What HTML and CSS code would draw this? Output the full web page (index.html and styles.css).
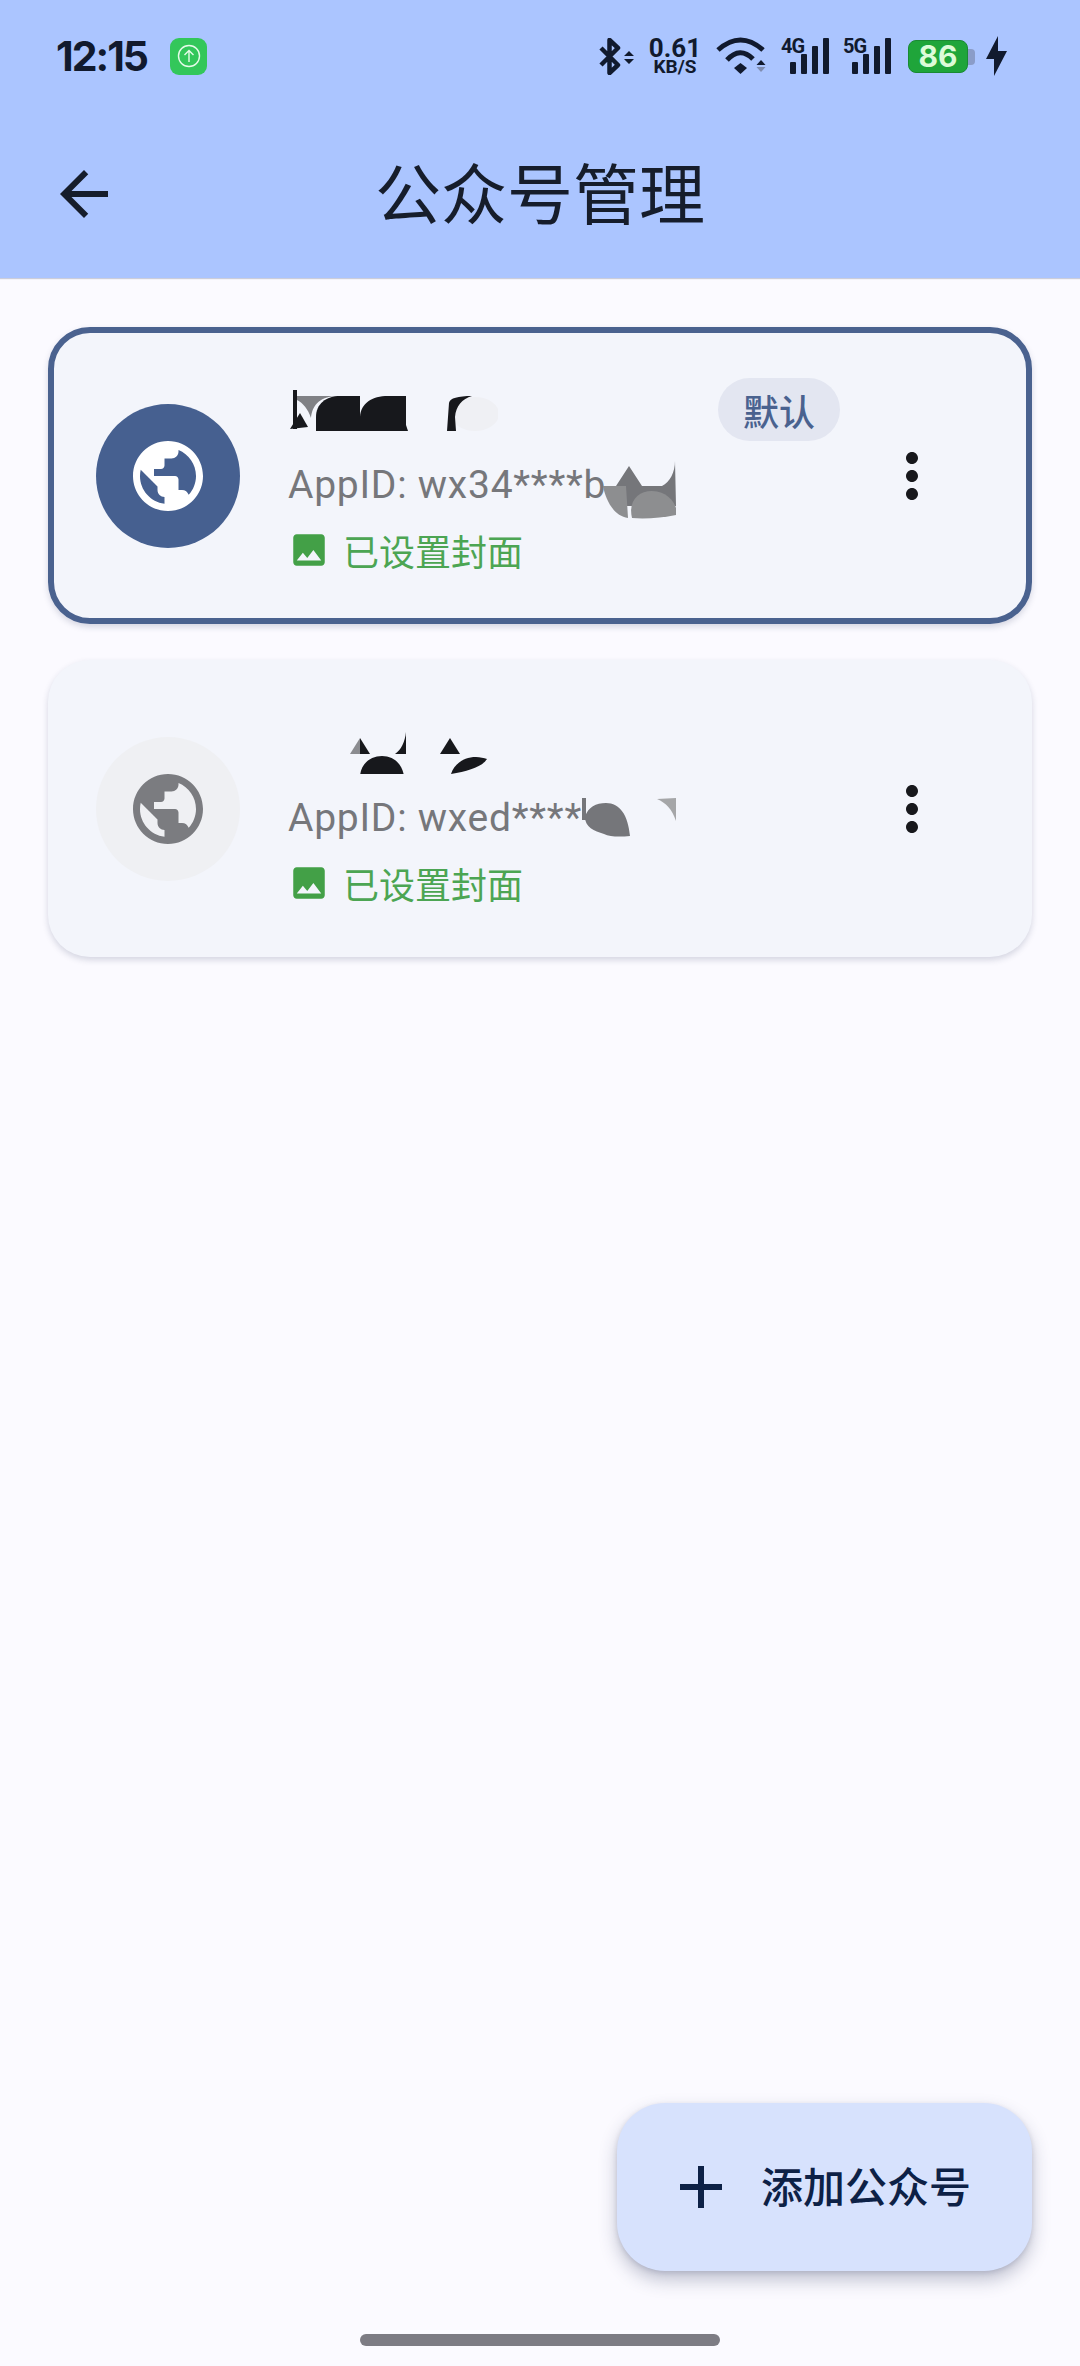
FILE: index.html
```html
<!DOCTYPE html>
<html>
<head>
  <title>公众号管理</title>
  <link rel="stylesheet" href="styles.css">
</head>
<body>
  <div class="header">
    <div class="status-bar">
      <span class="time">12:15</span>
      <span class="app-badge">
        <svg width="24" height="24" viewBox="0 0 24 24" fill="none" stroke="#e6fbe9" stroke-width="1.4"><circle cx="12" cy="12" r="10.5"/><path d="M12 18V6.5M7.5 11L12 6.5 16.5 11"/></svg>
      </span>
      <div class="status-icons">
        <svg width="36" height="37" viewBox="0 0 36 37"><path d="M2 10L19 27 10.500 35V2L19 10 2 27" fill="none" stroke="#111a2e" stroke-width="4.500" stroke-linejoin="round"/><path d="M30 13l5 5H25zM25 21h10l-5 5z" fill="#111a2e"/></svg>
        <div class="speed">
          <span class="speed-num">0.61</span>
          <span class="speed-unit">KB/S</span>
        </div>
        <svg width="52" height="38" viewBox="0 0 52 38" fill="none" stroke="#111a2e" stroke-width="5"><path d="M3 13Q25.500-7 48 13"/><path d="M12 23Q25 9 38 22"/><path d="M19 31l6.500-5 6.500 5-6.500 6z" fill="#111a2e" stroke="none"/><path d="M46 23l4.500 5h-9z" fill="#111a2e" stroke="none"/><path d="M41.500 30h9l-4.500 5z" fill="#7f8db0" stroke="none"/></svg>
        <svg class="net" width="48" height="38" viewBox="0 0 48 38"><text x="0" y="16">4G</text><rect x="9" y="25" width="6" height="12" rx="1"/><rect x="20" y="17" width="6" height="20" rx="1"/><rect x="31" y="9" width="6" height="28" rx="1"/><rect x="42" y="1" width="6" height="36" rx="1"/></svg>
        <svg class="net" width="48" height="38" viewBox="0 0 48 38"><text x="0" y="16">5G</text><rect x="9" y="25" width="6" height="12" rx="1"/><rect x="20" y="17" width="6" height="20" rx="1"/><rect x="31" y="9" width="6" height="28" rx="1"/><rect x="42" y="1" width="6" height="36" rx="1"/></svg>
        <div class="battery">
          <span class="battery-level">86</span>
          <span class="battery-cap"></span>
        </div>
        <svg class="bolt" width="21" height="40" viewBox="0 0 21 40"><path d="M12 0L0 23h8L8 40 21 15h-9z" fill="#111a2e"/></svg>
      </div>
    </div>
    <div class="toolbar">
      <svg class="back" width="72" height="72" viewBox="0 0 24 24"><path d="M20 11H7.830l5.590-5.590L12 4l-8 8 8 8 1.410-1.410L7.830 13H20v-2z" fill="#161d2b"/></svg>
      <h1 class="title">公众号管理</h1>
    </div>
  </div>

  <div class="list">
    <div class="card card-default">
      <div class="avatar avatar-on">
        <svg width="84" height="84" viewBox="0 0 24 24"><path d="M12 2C6.480 2 2 6.480 2 12s4.480 10 10 10 10-4.480 10-10S17.520 2 12 2zm-1 17.930c-3.950-.49-7-3.850-7-7.930 0-.62.08-1.210.21-1.790L9 15v1c0 1.100.9 2 2 2v1.930zm6.900-2.540c-.26-.81-1-1.390-1.900-1.390h-1v-3c0-.55-.45-1-1-1H8v-2h2c.55 0 1-.45 1-1V7h2c1.100 0 2-.9 2-2v-.41c2.930 1.190 5 4.060 5 7.410 0 2.080-.8 3.970-2.100 5.390z" fill="#fff"/></svg>
      </div>
      <div class="info">
        <div class="name-row">
          <!-- name is smudged out in the screenshot -->
          <svg class="smudge" width="210" height="63" viewBox="0 0 210 63">
            <rect x="5" y="12" width="4" height="39" fill="#17181c"/>
            <path d="M2 51l18-2-8-14z" fill="#17181c"/>
            <path d="M9 18H48C30 19 24 29 23 40 20 31 15 25 9 22z" fill="#808185"/>
            <path d="M28 53V39C28 26 38 18 52 18H72V53z" fill="#17181c"/>
            <path d="M72 53V39C73 25 84 18 100 18H118V47L120 53z" fill="#17181c"/>
            <ellipse cx="187" cy="36" rx="24" ry="17" fill="#eff0f4"/>
            <path d="M159 53L161 25C162 20 170 18 184 18 174 21 168 28 167 39L168 53z" fill="#17181c"/>
          </svg>
          <span class="tag">默认</span>
        </div>
        <div class="appid">
          AppID: wx34****b
          <svg class="smudge-id" width="80" height="66" viewBox="0 0 80 66">
            <path d="M3 30H16L29 10 42 30H62C70 26 75 16 75 5L76 50H12z" fill="#75767a"/>
            <path d="M3 30H26L28 62C14 60 6 45 3 30z" fill="#8d8e90"/>
            <path d="M32 62C28 45 38 35 52 35 66 35 74 45 76 52V59C62 62 45 63 32 62z" fill="#8d8e90"/>
          </svg>
        </div>
        <div class="cover">
          <svg width="42" height="42" viewBox="0 0 24 24"><path d="M21 19V5c0-1.100-.9-2-2-2H5c-1.100 0-2 .9-2 2v14c0 1.100.9 2 2 2h14c1.100 0 2-.9 2-2zM8.500 13.500l2.500 3.010L14.500 12l4.500 6H5l3.500-4.500z" fill="#43a047"/></svg>
          <span>已设置封面</span>
        </div>
      </div>
      <svg class="more" width="72" height="72" viewBox="0 0 24 24"><path d="M12 8c1.100 0 2-.9 2-2s-.9-2-2-2-2 .9-2 2 .9 2 2 2zm0 2c-1.100 0-2 .9-2 2s.9 2 2 2 2-.9 2-2-.9-2-2-2zm0 6c-1.100 0-2 .9-2 2s.9 2 2 2 2-.9 2-2-.9-2-2-2z" fill="#17181c"/></svg>
    </div>

    <div class="card">
      <div class="avatar avatar-off">
        <svg width="84" height="84" viewBox="0 0 24 24"><path d="M12 2C6.480 2 2 6.480 2 12s4.480 10 10 10 10-4.480 10-10S17.520 2 12 2zm-1 17.930c-3.950-.49-7-3.850-7-7.930 0-.62.08-1.210.21-1.790L9 15v1c0 1.100.9 2 2 2v1.930zm6.900-2.540c-.26-.81-1-1.390-1.900-1.390h-1v-3c0-.55-.45-1-1-1H8v-2h2c.55 0 1-.45 1-1V7h2c1.100 0 2-.9 2-2v-.41c2.930 1.190 5 4.060 5 7.410 0 2.080-.8 3.970-2.100 5.390z" fill="#7b7c80"/></svg>
      </div>
      <div class="info">
        <div class="name-row">
          <svg class="smudge" width="210" height="63" viewBox="0 0 210 63">
            <path d="M62 43L72 43 72 27z" fill="#8b8c90"/>
            <path d="M72 27L72 43H82z" fill="#17181c"/>
            <path d="M118 21V43H107C113 39 117 31 118 21z" fill="#17181c"/>
            <path d="M72 65C73 52 83 45 94 45 105 45 114 52 116 65z" fill="#17181c"/>
            <path d="M152 43L162 27 172 43z" fill="#17181c"/>
            <path d="M163 63C166 53 176 46 188 46 192 46 196 47 199 48 194 56 180 60 163 63z" fill="#17181c"/>
          </svg>
        </div>
        <div class="appid">
          AppID: wxed****
          <svg class="smudge-id smudge-id-2" width="100" height="46" viewBox="0 0 100 46">
            <rect x="2" y="5" width="4" height="22" fill="#75767a"/>
            <path d="M5 24C8 14 16 10 26 10 40 10 48 22 50 43 40 44 30 44 24 41 14 38 5 34 5 24z" fill="#75767a"/>
            <path d="M77 6L96 5V28C92 16 86 10 77 6z" fill="#a5a6a8"/>
          </svg>
        </div>
        <div class="cover">
          <svg width="42" height="42" viewBox="0 0 24 24"><path d="M21 19V5c0-1.100-.9-2-2-2H5c-1.100 0-2 .9-2 2v14c0 1.100.9 2 2 2h14c1.100 0 2-.9 2-2zM8.500 13.500l2.500 3.010L14.500 12l4.500 6H5l3.500-4.500z" fill="#43a047"/></svg>
          <span>已设置封面</span>
        </div>
      </div>
      <svg class="more" width="72" height="72" viewBox="0 0 24 24"><path d="M12 8c1.100 0 2-.9 2-2s-.9-2-2-2-2 .9-2 2 .9 2 2 2zm0 2c-1.100 0-2 .9-2 2s.9 2 2 2 2-.9 2-2-.9-2-2-2zm0 6c-1.100 0-2 .9-2 2s.9 2 2 2 2-.9 2-2-.9-2-2-2z" fill="#17181c"/></svg>
    </div>
  </div>

  <div class="fab">
    <svg width="72" height="72" viewBox="0 0 24 24"><path d="M19 13h-6v6h-2v-6H5v-2h6V5h2v6h6v2z" fill="#0d2146"/></svg>
    <span class="fab-label">添加公众号</span>
  </div>

  <div class="home-bar"></div>
</body>
</html>
```

FILE: styles.css
```css
* { box-sizing: border-box; }
body {
  margin: 0; height: 2366px; overflow: hidden; position: relative;
  display: flex; flex-direction: column;
  background: #fbfaff;
  font-family: Roboto, "Noto Sans CJK SC", sans-serif;
}

/* header */
.header { height: 278px; background: #abc5ff; box-shadow: 0 1px 1px rgba(60,70,110,0.25); flex: none; }
.status-bar { height: 110px; display: flex; align-items: center; padding: 2px 73px 0 56px; }
.time { font-family: Inter, sans-serif; font-weight: 700; font-size: 41px; letter-spacing: -2px; color: #111a2e; }
.app-badge {
  width: 37px; height: 37px; margin-left: 23px; border-radius: 9px; background: #33c75a;
  display: flex; align-items: center; justify-content: center;
}
.status-icons { margin-left: auto; display: flex; align-items: center; gap: 14px; }
.speed { width: 52px; display: flex; flex-direction: column; align-items: center; color: #111a2e; font-weight: 700; }
.speed-num { font-size: 26px; line-height: 21px; }
.speed-unit { font-size: 19px; line-height: 15px; }
.net { overflow: visible; }
.net rect { fill: #111a2e; }
.net text { font-family: Roboto, sans-serif; font-weight: 700; font-size: 20px; letter-spacing: -1px; fill: #111a2e; }
.battery {
  width: 60px; height: 33px; margin-left: 3px; margin-right: 7px; position: relative;
  background: #1fa53a; border-radius: 8px; border: 1px solid #1a8a33;
  display: flex; align-items: center; justify-content: center;
}
.battery-level { font-family: Inter, sans-serif; font-weight: 700; font-size: 30px; color: #dcfbd8; }
.battery-cap { position: absolute; right: -8px; top: 8px; width: 7px; height: 16px; background: #8a9cc8; border-radius: 0 4px 4px 0; }
.bolt { margin-left: -3px; }
.toolbar { height: 168px; padding-left: 48px; display: grid; grid-template-columns: 1fr auto 1fr; align-items: center; }
.title { margin: 0 0 8px -48px; font-size: 66px; font-weight: 400; color: #161d2b; line-height: 1; font-family: "Noto Sans CJK SC", sans-serif; }

/* account cards */
.list { padding: 49px 48px 0; display: flex; flex-direction: column; gap: 36px; }
.card {
  height: 297px; display: flex; align-items: center; padding: 0 78px 0 42px;
  background: #f3f5fb; border: 6px solid transparent; border-radius: 42px;
  box-shadow: 0 3px 6px rgba(40,50,90,0.18);
}
.card-default { border-color: #4a628f; }
.avatar { width: 144px; height: 144px; border-radius: 50%; display: flex; align-items: center; justify-content: center; flex: none; }
.avatar-on { background: #466090; }
.avatar-off { background: #eff0f3; }
.info { flex: 1; margin-left: 48px; min-width: 0; }
.name-row { height: 63px; display: flex; align-items: flex-start; }
.tag {
  margin-left: auto; width: 122px; height: 63px; border-radius: 32px; background: #e3e6f1;
  color: #4a628f; font-size: 36px; font-weight: 500; display: flex; align-items: center; justify-content: center;
  font-family: "Noto Sans CJK SC", sans-serif;
}
.appid { position: relative; margin-top: 14px; height: 60px; line-height: 60px; font-size: 39px; color: #76777b; letter-spacing: 0.75px; white-space: nowrap; }
.smudge-id { position: absolute; left: 312px; top: 1px; }
.smudge-id-2 { left: 292px; top: 5px; }
.cover { display: flex; align-items: center; gap: 13px; margin-top: 12px; height: 46px; font-size: 36px; color: #4ca553; font-family: "Noto Sans CJK SC", sans-serif; }
.more { flex: none; margin-left: 36px; }

/* add button */
.fab {
  position: absolute; right: 48px; bottom: 95px; width: 415px; height: 168px;
  display: flex; align-items: center; gap: 24px; padding-left: 48px;
  background: #d7e2fd; border-radius: 48px; color: #0d2146;
  font-size: 42px; font-weight: 500; font-family: "Noto Sans CJK SC", sans-serif;
  box-shadow: 0 9px 18px rgba(40,50,90,0.28), 0 2px 5px rgba(40,50,90,0.15);
}
.fab-label { margin-bottom: 6px; }

.home-bar { width: 360px; height: 12px; margin: auto auto 20px; border-radius: 6px; background: #7d7c84; }
```
